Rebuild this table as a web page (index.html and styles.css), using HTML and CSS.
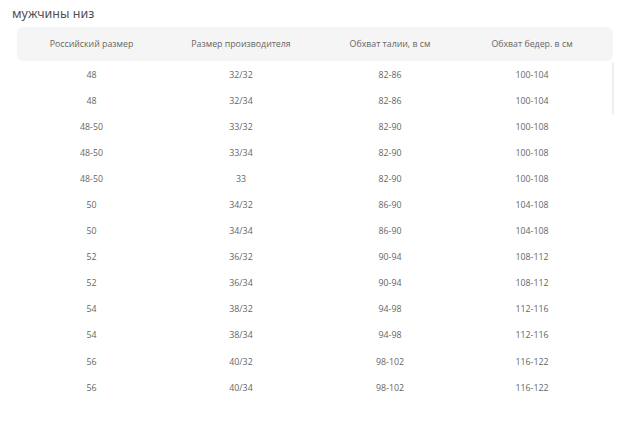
FILE: index.html
```html
<!DOCTYPE html>
<html lang="ru">
<head>
<meta charset="utf-8">
<link rel="stylesheet" href="styles.css">
</head>
<body>
<div class="page">
  <div class="title">мужчины низ</div>
  <div class="table-wrap">
    <div class="scroll-thumb"></div>
    <div class="row head">
      <div>Российский размер</div><div>Размер производителя</div><div>Обхват талии, в см</div><div>Обхват бедер. в см</div>
    </div>
    <div class="row"><div>48</div><div>32/32</div><div>82-86</div><div>100-104</div></div>
    <div class="row"><div>48</div><div>32/34</div><div>82-86</div><div>100-104</div></div>
    <div class="row"><div>48-50</div><div>33/32</div><div>82-90</div><div>100-108</div></div>
    <div class="row"><div>48-50</div><div>33/34</div><div>82-90</div><div>100-108</div></div>
    <div class="row"><div>48-50</div><div>33</div><div>82-90</div><div>100-108</div></div>
    <div class="row"><div>50</div><div>34/32</div><div>86-90</div><div>104-108</div></div>
    <div class="row"><div>50</div><div>34/34</div><div>86-90</div><div>104-108</div></div>
    <div class="row"><div>52</div><div>36/32</div><div>90-94</div><div>108-112</div></div>
    <div class="row"><div>52</div><div>36/34</div><div>90-94</div><div>108-112</div></div>
    <div class="row"><div>54</div><div>38/32</div><div>94-98</div><div>112-116</div></div>
    <div class="row"><div>54</div><div>38/34</div><div>94-98</div><div>112-116</div></div>
    <div class="row"><div>56</div><div>40/32</div><div>98-102</div><div>116-122</div></div>
    <div class="row"><div>56</div><div>40/34</div><div>98-102</div><div>116-122</div></div>
  </div>
</div>
</body>
</html>
```

FILE: styles.css
```css
html, body {
  margin: 0;
  padding: 0;
  background: #ffffff;
}
.page {
  padding: 5px 0 0 12px;
  font-family: "Open Sans", "Noto Sans", sans-serif;
}
.title {
  margin: 0;
  font-family: "Noto Sans", "Open Sans", sans-serif;
  font-weight: 400;
  font-size: 12.5px;
  line-height: 18px;
  color: #505050;
}
.table-wrap {
  position: relative;
  width: 596px;
  margin: 4px 0 0 5px;
}
.scroll-thumb {
  position: absolute;
  right: -1px;
  top: 35px;
  width: 2px;
  height: 53px;
  background: #efefef;
  border-radius: 1px;
}
.row {
  display: grid;
  grid-template-columns: 149px 150px 148px 136px;
  height: 26.1px;
  padding-top: 1px;
  box-sizing: border-box;
  align-items: center;
  font-size: 8.8px;
  color: #666666;
  text-align: center;
}
.row.head {
  height: 34px;
  padding-top: 0;
  background: #f5f5f5;
  border-radius: 6px;
}
```
